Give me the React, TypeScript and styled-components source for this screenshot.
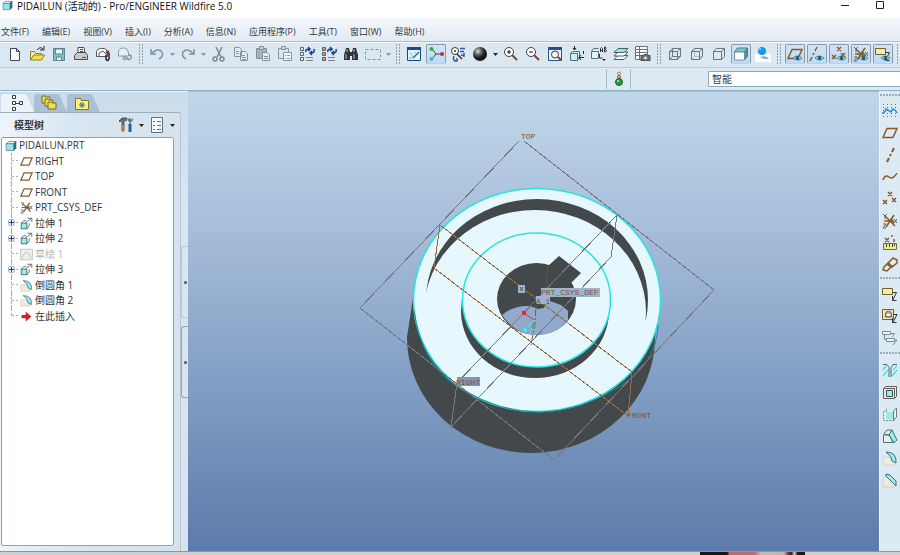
import React, { ReactNode } from "react";
import styled, { createGlobalStyle } from "styled-components";

const GlobalStyle = createGlobalStyle`
  *, *::before, *::after { box-sizing: border-box; }
  body {
    margin: 0;
    overflow: hidden;
    color: #303840;
    font-family: "Open Sans", "Noto Sans CJK SC", sans-serif;
  }
  button, select { font: inherit; color: inherit; }
  button { padding: 0; border: 0; background: none; }
`;

const Window = styled.div`
  display: flex;
  flex-direction: column;
  height: 100vh;
  background: #dceaf4;
`;

const TitleBar = styled.header`
  display: flex;
  align-items: flex-start;
  height: 18px;
  padding-left: 2px;
  background: #fff;
  svg { flex: none; }
`;

const Title = styled.h1`
  flex: 1;
  margin: 0 0 0 4px;
  font-size: 10px;
  line-height: 12px;
  font-weight: 400;
  color: #111;
  white-space: nowrap;
`;

const WindowButton = styled.button`
  display: flex;
  justify-content: center;
  width: 35px;
  height: 12px;
  &:last-child { margin-right: 3px; }
`;

const MenuBar = styled.nav`
  display: flex;
  align-items: center;
  gap: 13px;
  height: 23px;
  padding: 4px 0 0 1px;
  background: linear-gradient(#f3f8fd, #e2eaf2);
`;

const MenuButton = styled.button`
  font-size: 9px;
  line-height: 14px;
  white-space: nowrap;
`;

const ToolBar = styled.div`
  display: flex;
  align-items: center;
  height: 27px;
  padding: 0 0 1px 4px;
  overflow: hidden;
  border-top: 1px solid #aebfcc;
  border-bottom: 1px solid #bccbd7;
  background: #dbe8f2;
  box-shadow: inset 0 1px #f2f8fc;
`;

const ToolGroup = styled.div`
  display: flex;
  flex: none;
  align-items: center;
`;

const Grip = styled.span`
  flex: none;
  width: 4px;
  height: 21px;
  margin: 0 3px;
  background:
    linear-gradient(#dbe8f2, #dbe8f2) 1px 0 / 2px 100% no-repeat,
    repeating-linear-gradient(#8fa1b0 0 2px, transparent 2px 3px);
`;

const Tool = styled.button<{ $pressed?: boolean; $dim?: boolean }>`
  display: flex;
  align-items: center;
  justify-content: center;
  width: 20px;
  height: 20px;
  margin: 0 1px;
  border-radius: 2px;
  border: 1px solid ${p => (p.$pressed ? "#8b9aa8" : "transparent")};
  border-bottom-color: ${p => (p.$pressed ? "#b9d3ea" : "transparent")};
  background: ${p => (p.$pressed ? "linear-gradient(#d2e3f3, #b9dcfa)" : "none")};
  svg { flex: none; opacity: ${p => (p.$dim ? 0.7 : 1)}; }
`;

const Caret = styled.button<{ $dim?: boolean }>`
  display: flex;
  align-items: center;
  justify-content: center;
  width: 9px;
  height: 20px;
  opacity: ${p => (p.$dim ? 0.4 : 1)};
`;

const StatusBar = styled.div`
  display: flex;
  align-items: center;
  height: 23px;
  border-bottom: 1px solid #8fb0c6;
  background: linear-gradient(#dce9f3, #dceaf4);
`;

const Message = styled.output`
  flex: 1;
`;

const Light = styled.button`
  display: flex;
  align-items: center;
  justify-content: center;
  width: 25px;
  height: 20px;
  border: solid #a9bdcb;
  border-width: 0 1px;
`;

const FilterSelect = styled.select`
  appearance: none;
  width: 192px;
  height: 16px;
  margin-left: 77px;
  padding: 0 3px;
  border: 1px solid #8ca7b8;
  border-right: 0;
  border-radius: 2px 0 0 2px;
  background: #fff;
  font-size: 10px;
  line-height: 14px;
`;

const Workspace = styled.div`
  display: flex;
  flex: 1;
  min-height: 0;
`;

const Navigator = styled.aside`
  display: flex;
  width: 188px;
  border-top: 1px solid #eef6fb;
  background: linear-gradient(#cbdceb, #d9e7f1 120px, #d5e4ef);
`;

const NavColumn = styled.div`
  display: flex;
  flex-direction: column;
  flex: 1;
`;

const Tabs = styled.div`
  display: flex;
  height: 20px;
  padding: 2px 0 0 1px;
`;

const Tab = styled.button<{ $active?: boolean }>`
  display: flex;
  align-items: center;
  padding-left: 7px;
  width: 33px;
  height: 18px;
  clip-path: polygon(0 2px, 2px 0, 25px 0, 33px 100%, 0 100%);
  background: ${p => (p.$active ? "#edf3f8" : "#a9c0d7")};
`;

const Panel = styled.section`
  display: flex;
  flex-direction: column;
  flex: 1;
  min-height: 0;
  padding: 0 6px 5px 1px;
  border-top: 1px solid #9caebb;
  border-right: 1px solid #b5c5d1;
  border-top-right-radius: 3px;
  background: linear-gradient(90deg, #eef4f9, #d9e6f1 40%, #d5e3ee);
`;

const PanelHead = styled.div`
  display: flex;
  align-items: center;
  height: 24px;
  margin-right: -3px;
  padding-left: 13px;
`;

const PanelTitle = styled.h2`
  flex: 1;
  margin: 0;
  font-size: 10px;
  line-height: 14px;
  font-weight: 700;
`;

const Tree = styled.ul`
  flex: 1;
  margin: 0;
  padding: 0 0 0 3px;
  list-style: none;
  border: 1px solid #7fa7bb;
  border-radius: 2px;
  background: #fff;
`;

const Item = styled.li<{ $child?: boolean; $dim?: boolean; $last?: boolean }>`
  display: flex;
  align-items: center;
  height: 15px;
  padding-left: ${p => (p.$child ? 15 : 0)}px;
  color: ${p => (p.$dim ? "#b4b4b4" : "#303840")};
  font-size: 10px;
  line-height: 15px;
  white-space: nowrap;
  position: relative;
  &:nth-child(even) { height: 16px; }
  svg { flex: none; margin-right: 2px; }
  &::before {
    content: ${p => (p.$child ? '""' : "none")};
    position: absolute;
    left: 6px;
    top: 0;
    width: 8px;
    height: ${p => (p.$last ? "8px" : "100%")};
    border-left: 1px dashed #a9a9a9;
    background: linear-gradient(90deg, #b0b0b0 50%, transparent 50%) 0 7px / 4px 1px repeat-x;
  }
`;

const Expander = styled.button`
  position: absolute;
  left: 3px;
  top: 4px;
  width: 7px;
  height: 7px;
  border: 1px solid #a9bccd;
  border-radius: 2px;
  background:
    linear-gradient(#27415e, #27415e) center / 5px 1px no-repeat,
    linear-gradient(#27415e, #27415e) center / 1px 5px no-repeat,
    #eef4fa;
`;

const Sashes = styled.div`
  display: flex;
  flex-direction: column;
  gap: 8px;
  width: 7px;
  padding-top: 154px;
`;

const Sash = styled.button<{ $strong?: boolean }>`
  display: flex;
  align-items: center;
  justify-content: center;
  height: 72px;
  border: 1px solid ${p => (p.$strong ? "#91a5b4" : "#bccbd6")};
  border-right: 0;
  border-radius: 3px 0 0 3px;
  &::before { content: ""; width: 3px; height: 3px; border-radius: 50%; background: #4b5661; }
`;

const Viewport = styled.main`
  flex: 1;
  min-width: 0;
  border-top: 1px solid #a5bfd2;
  background: linear-gradient(#c0d7ea, #a9bfda 28%, #8ba6ca 55%, #5c7bab);
  svg { display: block; width: 100%; height: 100%; }
`;

const FeatureBar = styled.div`
  display: flex;
  flex-direction: column;
  align-items: center;
  width: 21px;
  padding-top: 3px;
  border-left: 1px solid #eef6fb;
  background: #dceaf4;
`;

const FeatureGroup = styled.div<{ $gap: number; $tail: number }>`
  display: flex;
  flex-direction: column;
  width: 100%;
  align-items: center;
  padding-bottom: ${p => p.$tail}px;
  &::before {
    content: "";
    width: 100%;
    height: 2px;
    margin-bottom: ${p => p.$gap}px;
    background: linear-gradient(90deg, #9aadbd 67%, transparent 67%) 0 0 / 3px 2px;
  }
`;

const Feature = styled.button`
  display: flex;
  align-items: center;
  justify-content: center;
  width: 20px;
  height: 22px;
`;

const Desktop = styled.footer`
  display: flex;
  justify-content: flex-end;
  height: 4px;
  padding-right: 95px;
  border-top: 1px solid #8d969e;
  background: #cfcfcf;
`;

const Picture = styled.div`
  width: 105px;
  background: linear-gradient(90deg, #17171b 26%, #bc6b6c 28%, #b86f6b 52%, #c9b9ae 58%, #bdb8b0 80%, #7c3040 84%, #26262a 87%, #ccc 90%, #1b1b1f 93%);
`;

const CY = "#9aebeb";
const BR = "#8a5a24";
const K = "#3d4852";

const eye = (
  <g>
    <path d="M6 12q4-4 9 0q-4 4-9 0z" fill="#e3f1f5" stroke="#5b7480" />
    <circle cx="10.500" cy="12" r="2" fill="#176273" />
  </g>
);
const folder = (x: number, y: number) => (
  <path d={`M${x} ${y}h3l1 1h4v6h-8z`} fill="#f3de59" stroke="#786c23" />
);
const magnifier = (
  <g fill="none">
    <path d="m9 9 5 5" stroke="#7b4531" strokeWidth="2" />
    <circle cx="6" cy="6" r="4.500" fill="#fff" stroke="#3d4043" />
  </g>
);
const sheets = (
  <g fill="#e9eef2" stroke="#66717b">
    <path d="M1.500 1.500h5l2 2v7h-7zM7.500 5.500h5l2 2v7h-7z" />
    <path d="M3 5.500h3M3 7.500h3M9 9.500h3M9 11.500h4M9 13.500h4" />
  </g>
);
const regen = (tint: string) => (
  <g fill="none">
    <path d="M1.500 1.500h3v3h-3zM1.500 6.500h3v3h-3zM1.500 11.500h3v3h-3z" fill={tint} stroke="#536773" />
    <path d="M7 6q-1-3 3-3M9 1l2 2-2 2M15 3q1 4-3 4M13 5l-2 2 2 2" stroke="#173f91" strokeWidth="1.500" />
    <path d="M7 11.500h7M7 14.500h7" stroke="#7c858c" />
  </g>
);
const cubeWire = (
  <path d="M2.500 5.500h8v8h-8zM5.500 2.500h8v8h-8zM2.500 5.500l3-3M10.500 5.500l3-3M10.500 13.500l3-3M2.500 13.500l3-3" fill="none" stroke="#6b757d" />
);
const plane = <path d="M5 3.500h10l-4 9H1z" fill="none" stroke={BR} strokeWidth="1.500" />;
const axis = <path d="m12 1-2 4M9 7l-1 2M7 11l-2 4" fill="none" stroke={BR} strokeWidth="2" />;
const points = (
  <path d="M6 1l4 4M10 1 6 5M1 9l4 4M5 9l-4 4M10 7l4 4M14 7l-4 4" fill="none" stroke={BR} strokeWidth="1.500" />
);
const csys = (
  <g fill="none">
    <path d="m3 3 10 10M12 2 4 14M2 8h8M9 5l3 5" stroke={BR} strokeWidth="1.500" />
    <path d="m1 1 2 2 2-2M3 3v3M1 11h3l-3 4h3M12 6l3 4M15 6l-3 4" stroke="#59646c" />
  </g>
);
const note = (
  <g>
    <path d="M.5 2.500h10v6H.5z" fill="#f9eba9" stroke="#73602f" />
    <path d="M10.500 6.500h4l-4 8M10.500 10v4.500h4" fill="none" stroke="#34393e" />
  </g>
);

const icons: Record<string, ReactNode> = {
  plane, axis, points, csys, note,
  solid: <g strokeLinejoin="round"><path d="m1.500 5 3-3h10l-3 3z" fill="#dffafa" stroke="#5a8089" /><path d="m11.500 5 3-3v9l-3 3z" fill="#2d6f78" stroke="#2d5560" /><path d="M1.500 5h10v9h-10z" fill="#8fe8ea" stroke="#5a8089" /></g>,
  shaded: <g strokeLinejoin="round"><path d="m1.500 6 3-4h10l-3 4z" fill="#6fd0d2" stroke="#5f727c" /><path d="m11.500 6 3-4v8l-3 4z" fill="#3d9aa1" stroke="#5f727c" /><path d="M1.500 6h10v8h-10z" fill="#fafdfd" stroke="#7d8e97" /></g>,
  doc: <g fill="#f5f9fb" stroke="#60727e"><path d="M2.500.5h11v15h-11z" /><path d="M4 4.500h2M8 4.500h4M4 8.500h2M8 8.500h4M4 12.500h2M8 12.500h4" /></g>,
  new: <path d="M3.500 2.500h6l3 3v9h-9zM9.500 2.500v3h3" fill="#fff" stroke={K} />,
  open: <g stroke="#8a842c"><path d="M1.500 14V5.500h4l1 2h6V10" fill="#f8f3a8" /><path d="m1.500 14 3-5h11l-3 5z" fill="#eee04a" /><path d="M8 4q3-4 6-1M11 4h4V0" fill="none" stroke="#222" /></g>,
  save: <g stroke="#5a8488"><path d="M2.500 2.500h11v12h-11z" fill="#7cc2c1" /><path d="M4.500 3h7v5h-7z" fill="#eff9f9" /><path d="M5.500 11h5v3.500h-5z" fill="#e4eeee" /></g>,
  print: <g stroke="#4a4c50"><path d="M5 8V1.500h6L12 8" fill="#fff" /><path d="m1.500 9.500 3-3h8l2 3v4h-13z" fill="#cdc8c6" /><path d="M7 3.500h3M7 5.500h3M2 13.500h12" fill="none" /><path d="M9 11.500h4" stroke="#b93737" /></g>,
  mail: <g stroke="#555a60" fill="#fff"><path d="M1.500 10.500v-5q1-3 4-3h4q3 1 3 4v4z" /><path d="M4 10.500V7l4-2 4 4" fill="none" /><path d="M11 7q3-2 3 1v5q-2 3-3 0V9" fill="none" stroke="#222" strokeWidth="1.500" /><path d="M11 5.500h3" stroke="#c43737" strokeWidth="2" /></g>,
  link: <g stroke="#687580" fill="#eef3f7"><path d="M1.500 10V5.500q1-4 6-3.500q4 1 4 5v3z" /><path d="M6 12q2-3 4 0t4 0q1-3-2-3M6 12q1 3 4 0" fill="none" strokeWidth="1.500" /></g>,
  undo: <path d="M2 3v5h5M2 8q7-7 11-2 2 4-3 7" fill="none" stroke="#576f88" strokeWidth="1.500" />,
  redo: <path d="M14 3v5H9M14 8Q7 1 3 6q-2 4 3 7" fill="none" stroke="#576f88" strokeWidth="1.500" />,
  cut: <g fill="none" stroke="#56616a" strokeWidth="1.500"><path d="m5 1 5 10M11 1 6 11" /><circle cx="4" cy="13" r="2" /><circle cx="11" cy="13" r="2" /></g>,
  copy: sheets,
  paste: <g stroke="#5e6973"><path d="M1.500 2.500h10v10h-10z" fill="#929ca4" /><path d="M4.500.5h4v3h-4z" fill="#ccc" /><path d="M7.500 6.500h5l2 2v6h-7zM9 10.500h4M9 12.500h4" fill="#eee" /></g>,
  pasteSpecial: <g stroke="#66717b"><path d="M1.500 2.500h10v10h-10z" fill="#dfe5ea" /><path d="M4.500.5h4v3h-4z" fill="#ccc" /><path d="M6.500 6.500h8v8h-8zM8 9.500h1M10 9.500h3M8 12.500h1M10 12.500h3" fill="#fff" /></g>,
  regen: regen("#e6eef2"),
  regenModel: regen("#df8c72"),
  find: <g fill="#303337"><path d="M3 2h3l1 4v8H1V9zM10 2h3l2 7v5H9V6zM6 6h4v4H6z" /><path d="M3 8v5M11 8v5M4 3v3M11 3v3" stroke="#bbb" /></g>,
  select: <path d="M.5 3.500h15v10H.5z" fill="none" stroke="#66717a" strokeDasharray="3 2" />,
  repaint: <g><path d="M1.500 1.500h13v13h-13z" fill="#dff3fc" stroke="#174783" /><path d="M1 2.500h14" stroke="#1c4a98" strokeWidth="3" /><path d="m7 12 6-6" stroke="#2d6a90" strokeWidth="1.500" /><path d="m4 7 2 1M9 6v1M3 12h3M5 10h2" stroke="#71b3d6" /></g>,
  spin: <g><path d="m4 3 4 5-4 5M8 8h6" fill="none" stroke="#444f56" /><circle cx="3.500" cy="3" r="2" fill="#2dac48" /><circle cx="14" cy="8" r="2" fill="#c52a34" /><circle cx="3.500" cy="13" r="2" fill="#59b4b8" /></g>,
  orient: <g fill="none"><circle cx="5" cy="5" r="3.500" fill="#fff" stroke="#333" /><circle cx="5" cy="5" r="1" fill="#333" /><path d="m7 8 5 5" stroke="#333" strokeWidth="1.500" /><path d="M10 2.500h5M10 5.500h4M4 10q-2 4 2 5M4 15h3v-3M14 7v3l-3-1" stroke="#3154a5" strokeWidth="1.500" /></g>,
  sphere: <g><defs><radialGradient id="ball" cx="35%" cy="30%"><stop stopColor="#ddd" /><stop offset="0.500" stopColor="#606367" /><stop offset="1" stopColor="#17191c" /></radialGradient></defs><circle cx="8" cy="8" r="7" fill="url(#ball)" /></g>,
  zoomIn: <g>{magnifier}<path d="M4 6h4M6 4v4" stroke="#111" /></g>,
  zoomOut: <g>{magnifier}<path d="M4 6h4" stroke="#111" /></g>,
  refit: <g><path d="M1.500 1.500h13v13h-13z" fill="#e8f3fa" stroke="#31528b" /><path d="M1 2.500h14" stroke="#2c4e90" strokeWidth="3" /><circle cx="8" cy="8.500" r="3.500" fill="#fff" stroke="#333" /><path d="m11 11 3 3" stroke="#7b4531" strokeWidth="2" /></g>,
  reorient: <g><path d="m1.500 7.500 2-2h7v6l-2 3h-7z" fill="#c9f1f2" stroke="#58717d" /><path d="M2 7.500h6.500v7" fill="none" stroke="#58717d" /><path d="M5.500 0v4M4 2l1.500 2L7 2M15 11.500h-5M12 9l-2 2.500 2 2.500M14.500 5v3" fill="none" stroke="#222" /></g>,
  views: <g><path d="M.5 5.500h7v7h-7zM.5 5.500l2-3h5" fill="#e6f3f6" stroke="#58717d" /><path d="M9.500 6V2.500q1-2 2 0V6M9 4.500h3M13.500 1v5h1q2-1 0-2.500h-1V1h1q1 1 0 2.500M8.500 8v4h3" fill="none" stroke="#333" /><path d="m11 13 2 2 2-2z" fill="#222" /></g>,
  layers: <g stroke="#4b5c62"><path d="m1 13.500 4-4h10l-4 4z" fill="#fff" /><path d="m1 10 4-4h10l-4 4z" fill="#fff" /><path d="m1 6.500 4-4h10l-4 4z" fill="#91ebe3" /></g>,
  camera: <g stroke="#6b747b"><path d="M.5.5h12v13H.5z" fill="#f9f9f9" /><path d="M1 3.500h11M1 6.500h11M1 9.500h11M4.500 1v12" /><path d="M6 9.500h2l1-1h3l1 1h2v5H6z" fill="#6d7072" stroke="#444a4e" /><circle cx="10.500" cy="12" r="2" fill="#ddd" /></g>,
  wire: cubeWire,
  hidden: <g><path d="M5.500 2.500v8h8M5.500 10.500l-3 3" stroke="#b3bcc3" fill="none" /><path d="M2.500 5.500h8v8h-8zM2.500 5.500l3-3h8l-3 3M13.500 2.500v8l-3 3" fill="none" stroke="#6b757d" /></g>,
  noHidden: <path d="M2.500 5.500h8v8h-8zM2.500 5.500l3-3h8l-3 3M13.500 2.500v8l-3 3" fill="none" stroke="#6b757d" />,
  ball: <g><path d="M0 8h16v8H0z" fill="#fff" /><path d="M5 11q5-2 9 1-4 3-9-1" fill="#8cb0c9" /><circle cx="7" cy="5" r="4" fill="#1b95ee" /><circle cx="5" cy="3" r="1" fill="#a3dcff" /></g>,
  planeEye: <g>{plane}{eye}</g>,
  axisEye: <g><path d="m8 1-2 4M5 7l-1 2M3 11l-2 4" stroke={BR} strokeWidth="1.500" />{eye}</g>,
  pointsEye: <g>{points}{eye}</g>,
  csysEye: <g>{csys}{eye}</g>,
  noteEye: <g>{note}{eye}</g>,
  light: <g><circle cx="8" cy="2.500" r="1.500" fill="#f5dccb" stroke="#a98059" /><circle cx="8" cy="6" r="1.500" fill="#e9c66f" stroke="#86632e" /><circle cx="8" cy="11" r="3.500" fill="#22a04a" stroke="#176236" /><circle cx="7" cy="10" r="1" fill="#b0efb3" /></g>,
  modelTree: <g fill="#fff" stroke="#34414c"><path d="M4.500.5h3v3h-3zM4.500 6.500h3v3h-3zM11.500 6.500h3v3h-3zM4.500 12.500h3v3h-3z" /><path d="M8 8.500h3" /></g>,
  folders: <g>{folder(1, 1)}{folder(4, 4)}{folder(7, 7)}</g>,
  favorites: <g><path d="M1.500 3.500h5l1 2h7v9h-13z" fill="#fff26a" stroke="#7f7837" /><path d="M8 7v6M5 10h6M6 8l4 4M10 8l-4 4" stroke="#337ab4" /></g>,
  settings: <g><path d="m1 4 3-3h5l-1 3-2-1H4L2 5zM4 4h2v10H4z" fill="#687785" stroke="#475663" /><path d="M5 8v7" stroke="#d17c1c" strokeWidth="2" /><path d="M12 7v8" stroke="#245f9e" strokeWidth="3" /><path d="M12 1v6M10 2l2 3 3-3" fill="none" stroke="#67747e" strokeWidth="1.500" /></g>,
  extrude: <g><path d="M1.500 7.500h7v7h-7z" fill={CY} stroke="#34565e" /><path d="m1.500 7.500 3-3h3M8.500 14.500l3-4V8M7 7l7-5M9 1.500h5.500V6" fill="none" stroke="#46575f" /></g>,
  sketch: <g stroke="#c4b9b9" fill="#eee"><path d="M.5 1.500h15v13H.5z" /><path d="M2 13Q8-3 14 13" fill="none" /></g>,
  round: <g><path d="M1 7h6l5 4v4H1z" fill="#eeebe0" stroke="#dad2c4" /><path d="M4 2q11 0 10 11l-4-2Q10 6 4 2z" fill={CY} stroke="#38747f" /></g>,
  insert: <path d="M2 6h5V2l7 6-7 6v-4H2z" fill="#cc2222" />,
  sketchTool: <g><path d="M1.500 1v14M5.500 1v14M9.500 1v14M13.500 1v14" stroke="#4479a7" strokeDasharray="1 2" /><path d="M0 10q3 0 4-4l5 3 2-3q3 1 4 4" fill="none" stroke="#2b92dc" strokeWidth="1.500" /></g>,
  curve: <path d="M1 11q2-6 6-3t8-4" fill="none" stroke={BR} strokeWidth="1.500" />,
  analysis: <g><path d="m3 3 4 4M7 3 3 7M10 0v2M12 4v3" stroke={BR} strokeWidth="1.500" /><path d="M1.500 8.500h13v6h-13z" fill="#f1e88a" stroke="#76712c" /><path d="M4.500 9v3M7.500 9v3M10.500 9v3M12.500 9v2" stroke="#444" /></g>,
  chain: <g fill="none" stroke={BR} strokeWidth="1.500"><path d="m2 10 4-4 4 3-5 5-4-1z" /><path d="m7 5 4-4 4 2v3l-5 4-4-2z" /></g>,
  refNote: <g><path d="M.5 1.500h11v10H.5z" fill="#f9eba9" stroke="#73602f" /><path d="m3 9 1-4h5l1 4z" fill="#fff" stroke="#666" /><circle cx="6.500" cy="6" r="3" fill="none" stroke="#666" /><path d="M11 6.500h4l-4 8M10.500 10v4.500h4" fill="none" stroke="#34393e" /></g>,
  boxes: <g fill="#eef4f8" stroke="#7d8992"><path d="M.5 1.500h8v3h-8zM4.500 8.500h8v3h-8z" /><path d="M9 3.500h3.500L10 7M12.500 10h2.500l-4 5M2.500 5v4.500h2" fill="none" /></g>,
  hole: <g><path d="M1 3h4v12H1zM11 3h4v12h-4z" fill="#bdf1f2" /><path d="M1 2.500h4l2 3V15M15 2.500h-4l-2 3V15" fill="none" stroke="#4a6b77" /><path d="m1 8 3-4M1 14l5-6M11 8l4-4M10 14l5-6" stroke="#3fb6bf" /></g>,
  shell: <g><path d="m1.500 4.500 2-2h11v10l-2 2h-11z" fill="#ebe7dd" stroke="#636057" /><path d="M4.500 6.500h6v6h-6z" fill={CY} stroke="#3b5357" /><path d="M2 4.500h10.500v10" fill="none" stroke="#636057" /></g>,
  rib: <g><path d="m1.500 6 3-3v7h8v4.500h-11z" fill="#eeebe0" stroke="#8b8779" strokeDasharray="2 1" /><path d="M4 6h7v7H4z" fill={CY} /><path d="m11.500 5 3-3v9l-3 3z" fill="#f3f1ea" stroke="#777" /></g>,
  draft: <g stroke="#47747e"><path d="m2 6 3-4h5L7 7zM1.500 7v7.500H11L7 7z" fill="#f3eee0" /><path d="m10 2 5 10-3 3L7 7z" fill={CY} /></g>,
  chamfer: <g><path d="m1 6 5-2 7 7v4H1z" fill="#eeebe0" stroke="#d5cdbd" /><path d="m4 2 4 1 6 6v5L4 4z" fill={CY} stroke="#426c73" /></g>,
};

function Icon({ name, size = 16 }: { name: string; size?: number }) {
  return <svg width={size} height={size} viewBox="0 0 16 16" aria-hidden="true">{icons[name]}</svg>;
}

const CaretMark = () => <svg width="5" height="3" viewBox="0 0 5 3" aria-hidden="true"><path d="M0 0h5L2.500 3z" fill="#222" /></svg>;

type ToolSpec = { icon: string; label: string; dim?: boolean; pressed?: boolean; caret?: boolean };
const t = (icon: string, label: string, flags: Partial<ToolSpec> = {}): ToolSpec => ({ icon, label, ...flags });

const toolGroups: ToolSpec[][] = [
  [t("new", "新建"), t("open", "打开"), t("save", "保存"), t("print", "打印"), t("mail", "发送"), t("link", "发送链接", { dim: true })],
  [
    t("undo", "撤消", { dim: true, caret: true }), t("redo", "重做", { dim: true, caret: true }), t("cut", "剪切", { dim: true }),
    t("copy", "复制", { dim: true }), t("paste", "粘贴", { dim: true }), t("pasteSpecial", "选择性粘贴", { dim: true }),
    t("regen", "再生"), t("regenModel", "再生管理器"), t("find", "查找"), t("select", "选择", { dim: true, caret: true }),
  ],
  [
    t("repaint", "重画"), t("spin", "旋转中心", { pressed: true }), t("orient", "定向模式"), t("sphere", "外观库", { caret: true }),
    t("zoomIn", "放大"), t("zoomOut", "缩小"), t("refit", "重新调整"), t("reorient", "重定向"), t("views", "视图列表"),
    t("layers", "层"), t("camera", "视图管理器"),
  ],
  [t("wire", "线框"), t("hidden", "隐藏线"), t("noHidden", "消隐"), t("shaded", "着色", { pressed: true }), t("ball", "增强的真实感")],
  [
    t("planeEye", "平面显示", { pressed: true }), t("axisEye", "轴显示", { pressed: true }), t("pointsEye", "点显示", { pressed: true }),
    t("csysEye", "坐标系显示", { pressed: true }), t("noteEye", "注释显示", { pressed: true }),
  ],
];

const menus = ["文件(F)", "编辑(E)", "视图(V)", "插入(I)", "分析(A)", "信息(N)", "应用程序(P)", "工具(T)", "窗口(W)", "帮助(H)"];

const tree: { icon: string; label: string; open?: boolean; dim?: boolean }[] = [
  { icon: "plane", label: "RIGHT" },
  { icon: "plane", label: "TOP" },
  { icon: "plane", label: "FRONT" },
  { icon: "csys", label: "PRT_CSYS_DEF" },
  { icon: "extrude", label: "拉伸 1", open: true },
  { icon: "extrude", label: "拉伸 2", open: true },
  { icon: "sketch", label: "草绘 1", dim: true },
  { icon: "extrude", label: "拉伸 3", open: true },
  { icon: "round", label: "倒圆角 1" },
  { icon: "round", label: "倒圆角 2" },
  { icon: "insert", label: "在此插入" },
];

const featureGroups: { gap: number; tail: number; items: [string, string][] }[] = [
  { gap: 4, tail: 1, items: [["sketchTool", "草绘"], ["plane", "基准平面"], ["axis", "基准轴"], ["curve", "曲线"], ["points", "基准点"], ["csys", "坐标系"], ["analysis", "分析"], ["chain", "参照"]] },
  { gap: 4, tail: 3, items: [["note", "注释"], ["refNote", "注释参照"], ["boxes", "传播"]] },
  { gap: 5, tail: 0, items: [["hole", "孔"], ["shell", "壳"], ["rib", "筋"], ["draft", "拔模"], ["round", "倒圆角"], ["chamfer", "倒角"]] },
];

function Model() {
  const dark = "#43484b";
  const face = "#e6f7fe";
  const edge = "#27e3e6";
  return (
    <svg viewBox="188 92 691 459" role="img" aria-label="PIDAILUN">
      <defs>
        <clipPath id="groove"><path d="M400 180H680V325L400 288z" /></clipPath>
        <clipPath id="rim"><ellipse cx="537" cy="300" rx="120" ry="108" /></clipPath>
      </defs>
      <path d="M413 298 407 337A124 115 0 0 0 533 453A124 115 0 0 0 655 337L660 300z" fill={dark} />
      <ellipse cx="537" cy="300" rx="123.500" ry="111.500" fill={face} stroke={edge} strokeWidth="1.500" />
      <path d="M414 310Q421 365 461 389T541 412T619 387T658 325" fill="none" stroke="#278b91" />
      <ellipse cx="537" cy="300" rx="111" ry="101" fill={dark} clipPath="url(#groove)" />
      <ellipse cx="535" cy="312" rx="111" ry="102" fill={face} clipPath="url(#rim)" />
      <path d="M462 298 461 311A74 67 0 0 0 609 311L611 298z" fill={dark} />
      <ellipse cx="536.500" cy="300" rx="74" ry="67" fill={face} stroke={edge} strokeWidth="1.500" />
      <ellipse cx="536.500" cy="299" rx="39.500" ry="36" fill={dark} />
      <path d="m548 266 11-10 22 17-10 10 5 12-20 6z" fill={dark} />
      <path d="m548 266-3 28" stroke="#51575c" />
      <path d="M502 315Q514 305 530 306l8 3 6-1 3-8 14 5 7 6v9Q556 335 536 335 515 334 502 315z" fill="#91a9cc" />
      <g fill="none" stroke="#777783" shapeRendering="crispEdges">
        <path d="M519 141 360 308 554 460 714 290 524 141" />
        <path d="m617 215-6 42-160 170 6-44z" />
      </g>
      <path d="m440 225-6 43 194 148 4-44z" fill="none" stroke="#9a6a40" shapeRendering="crispEdges" />
      <path d="m540 297-4 8-1 18-4 22" fill="none" stroke="#805930" strokeDasharray="7 2 2 2" />
      <path d="m524 313 10 7" stroke="#e02a36" />
      <path d="m534 320-8 9" stroke="#43e6e6" />
      <path d="m531 328 2-6 3 6z" fill="#31bd72" />
      <rect x="522" y="311" width="4" height="4" fill="#e62430" />
      <circle cx="525" cy="330" r="2" fill="#36eff0" />
      <path d="M518 285h7v8h-7zM536 296h14v8h-14zM541 288h59v9h-59z" fill="#9cb3d1" />
      <path d="M457 377h23v9h-23z" fill="#7d98be" />
      <path d="m520 287 3 4M523 287l-3 4" stroke="#5b5142" />
      <g fontFamily='"Liberation Mono", monospace' fontSize="8" fill="#85501c">
        <text x="521" y="139">TOP</text>
        <text x="541" y="295">PRT_CSYS_DEF</text>
        <text x="536" y="304">A_1</text>
        <text x="456" y="385">RIGHT</text>
        <text x="627" y="418">FRONT</text>
      </g>
    </svg>
  );
}

export default function App() {
  return (
    <Window>
      <GlobalStyle />
      <TitleBar>
        <Icon name="solid" size={11} />
        <Title>PIDAILUN (活动的) - Pro/ENGINEER Wildfire 5.0</Title>
        <WindowButton aria-label="最小化"><svg width="8" height="12"><path d="M0 5.500h8" stroke="#222" /></svg></WindowButton>
        <WindowButton aria-label="最大化"><svg width="8" height="12"><path d="M.5 1.500h7v7h-7z" fill="none" stroke="#222" /></svg></WindowButton>
      </TitleBar>
      <MenuBar>{menus.map(m => <MenuButton key={m}>{m}</MenuButton>)}</MenuBar>
      <ToolBar role="toolbar">
        {toolGroups.map((group, i) => (
          <ToolGroup key={i}>
            {group.map(tool => (
              <React.Fragment key={tool.icon}>
                <Tool aria-label={tool.label} $pressed={tool.pressed} $dim={tool.dim}><Icon name={tool.icon} /></Tool>
                {tool.caret && <Caret aria-label={`${tool.label}选项`} $dim={tool.dim}><CaretMark /></Caret>}
              </React.Fragment>
            ))}
            <Grip />
          </ToolGroup>
        ))}
      </ToolBar>
      <StatusBar>
        <Message />
        <Light aria-label="再生状态"><Icon name="light" /></Light>
        <FilterSelect aria-label="选取过滤器" defaultValue="智能"><option>智能</option></FilterSelect>
      </StatusBar>
      <Workspace>
        <Navigator>
          <NavColumn>
            <Tabs>
              <Tab $active aria-label="模型树"><Icon name="modelTree" /></Tab>
              <Tab aria-label="文件夹浏览器"><Icon name="folders" /></Tab>
              <Tab aria-label="收藏夹"><Icon name="favorites" /></Tab>
            </Tabs>
            <Panel>
              <PanelHead>
                <PanelTitle>模型树</PanelTitle>
                <Tool aria-label="设置"><Icon name="settings" /></Tool>
                <Caret aria-label="设置选项"><CaretMark /></Caret>
                <Tool aria-label="显示"><Icon name="doc" /></Tool>
                <Caret aria-label="显示选项"><CaretMark /></Caret>
              </PanelHead>
              <Tree>
                <Item><Icon name="solid" size={12} />PIDAILUN.PRT</Item>
                {tree.map((node, i) => (
                  <Item key={node.label} $child $dim={node.dim} $last={i === tree.length - 1}>
                    {node.open && <Expander aria-label={`展开${node.label}`} />}
                    <Icon name={node.icon} size={13} />{node.label}
                  </Item>
                ))}
              </Tree>
            </Panel>
          </NavColumn>
          <Sashes><Sash aria-label="折叠导航器" /><Sash $strong aria-label="调整导航器" /></Sashes>
        </Navigator>
        <Viewport><Model /></Viewport>
        <FeatureBar role="toolbar">
          {featureGroups.map((group, i) => (
            <FeatureGroup key={i} $gap={group.gap} $tail={group.tail}>
              {group.items.map(([icon, label]) => <Feature key={icon} aria-label={label}><Icon name={icon} /></Feature>)}
            </FeatureGroup>
          ))}
        </FeatureBar>
      </Workspace>
      <Desktop><Picture /></Desktop>
    </Window>
  );
}
